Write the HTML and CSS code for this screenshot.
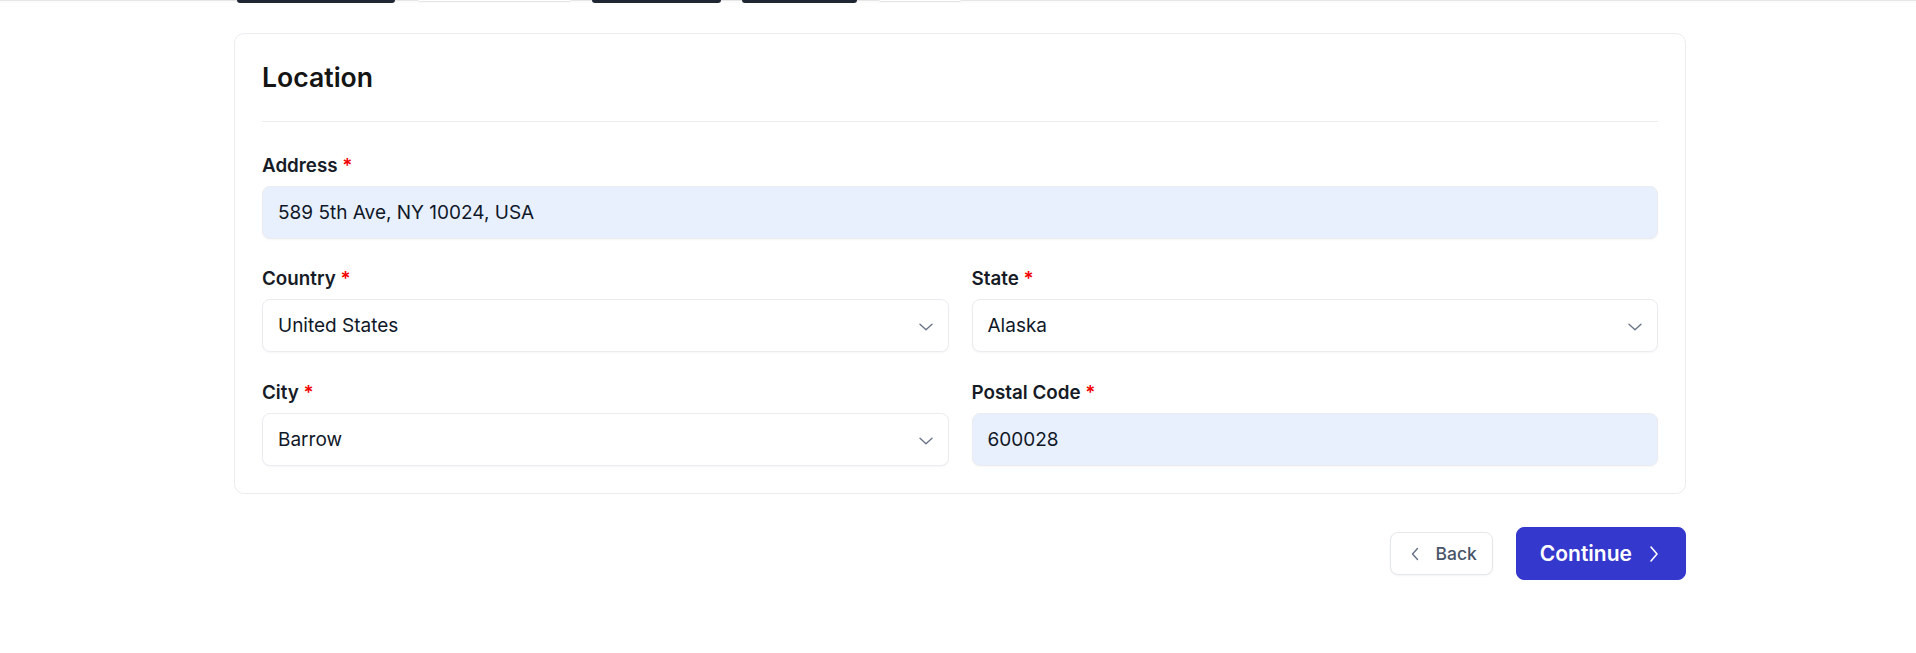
FILE: index.html
```html
<!DOCTYPE html>
<html lang="en">
<head>
<meta charset="utf-8">
<title>Location</title>
<link rel="stylesheet" href="styles.css">
</head>
<body>
<div class="page">
  <div class="topbar">
    <div class="tabs">
      <span class="pill pill-dark pill-a"></span>
      <span class="pill pill-light pill-b"></span>
      <span class="pill pill-dark pill-c"></span>
      <span class="pill pill-dark pill-d"></span>
      <span class="pill pill-light pill-e"></span>
    </div>
  </div>
  <main class="container">
    <section class="card">
      <h2 class="card-title">Location</h2>
      <div class="card-body">
        <div class="field field-full">
          <label class="label" for="address">Address <span class="req">*</span></label>
          <input id="address" class="input input-filled" type="text" value="589 5th Ave, NY 10024, USA">
        </div>
        <div class="grid">
          <div class="field">
            <label class="label">Country <span class="req">*</span></label>
            <div class="select">
              <span class="select-value">United States</span>
              <svg class="chev" width="14" height="8" viewBox="0 0 14 8"><path d="M1 1.2 L7 6.8 L13 1.2" fill="none" stroke="#667085" stroke-width="1.3" stroke-linecap="round" stroke-linejoin="round"/></svg>
            </div>
          </div>
          <div class="field">
            <label class="label">State <span class="req">*</span></label>
            <div class="select">
              <span class="select-value">Alaska</span>
              <svg class="chev" width="14" height="8" viewBox="0 0 14 8"><path d="M1 1.2 L7 6.8 L13 1.2" fill="none" stroke="#667085" stroke-width="1.3" stroke-linecap="round" stroke-linejoin="round"/></svg>
            </div>
          </div>
          <div class="field">
            <label class="label">City <span class="req">*</span></label>
            <div class="select">
              <span class="select-value">Barrow</span>
              <svg class="chev" width="14" height="8" viewBox="0 0 14 8"><path d="M1 1.2 L7 6.8 L13 1.2" fill="none" stroke="#667085" stroke-width="1.3" stroke-linecap="round" stroke-linejoin="round"/></svg>
            </div>
          </div>
          <div class="field">
            <label class="label" for="postal">Postal Code <span class="req">*</span></label>
            <input id="postal" class="input input-filled" type="text" value="600028">
          </div>
        </div>
      </div>
    </section>
    <div class="actions">
      <button class="btn btn-back" type="button">
        <svg width="8" height="14" viewBox="0 0 8 14"><path d="M6.5 1.5 L1.5 7 L6.5 12.5" fill="none" stroke="#667085" stroke-width="1.4" stroke-linecap="round" stroke-linejoin="round"/></svg>
        <span>Back</span>
      </button>
      <button class="btn btn-primary" type="button">
        <span>Continue</span>
        <svg width="10" height="18" viewBox="0 0 10 18"><path d="M2 2 L8 9 L2 16" fill="none" stroke="#ffffff" stroke-width="1.6" stroke-linecap="round" stroke-linejoin="round"/></svg>
      </button>
    </div>
  </main>
</div>
</body>
</html>
```

FILE: styles.css
```css
* { box-sizing: border-box; }

html, body {
  margin: 0;
  padding: 0;
  background: #ffffff;
}

body {
  font-family: "Inter", "Noto Sans", "Liberation Sans", sans-serif;
  color: #101828;
}

.topbar {
  height: 3px;
  border-top: 1px solid #e6e6e6;
  background: #fbfbfb;
}

.tabs {
  width: 1452px;
  margin-left: calc((100% - 1452px) / 2 + 2px);
  padding-left: 3px;
  display: flex;
  gap: 22px;
  margin-top: -1px;
}

.pill {
  display: block;
  height: 3px;
  border-radius: 0 0 4px 4px;
}

.pill-dark { background: #1f2733; }
.pill-light { background: #ffffff; border-bottom: 1px solid #e4e4e4; height: 2px; }

.pill-a { width: 158px; }
.pill-b { width: 153px; margin-left: 1px; }
.pill-c { width: 129px; margin-left: -1px; }
.pill-d { width: 115px; margin-left: -1px; }
.pill-e { width: 82px; }

.container {
  width: 1452px;
  margin-left: calc((100% - 1452px) / 2 + 2px);
  padding-top: 30px;
}

.card {
  border: 1px solid #eaecf0;
  border-radius: 10px;
  padding: 26px 27px 27px;
  background: #ffffff;
}

.card-title {
  margin: 0;
  font-size: 26.6px;
  line-height: 34px;
  font-weight: 600;
  color: #141414;
  padding-bottom: 27px;
  border-bottom: 1px solid #eaecf0;
}

.card-body {
  padding-top: 31px;
}

.field {
  display: flex;
  flex-direction: column;
}

.field-full {
  margin-bottom: 27px;
}

.label {
  font-size: 18.8px;
  line-height: 26px;
  font-weight: 600;
  color: #161b26;
  margin-bottom: 7px;
}

.req {
  color: #f20000;
}

.grid {
  display: grid;
  grid-template-columns: 1fr 1fr;
  column-gap: 23px;
  row-gap: 28px;
}

.input,
.select {
  height: 53px;
  width: 100%;
  border: 1px solid #eaecf0;
  border-radius: 8px;
  padding: 0 15px;
  font-family: "Inter", "Noto Sans", "Liberation Sans", sans-serif;
  font-size: 19px;
  color: #101828;
  background: #ffffff;
  box-shadow: 0 1px 2px rgba(16, 24, 40, 0.04);
  outline: none;
}

.input-filled {
  background: #e8f0fe;
}

.select {
  display: flex;
  align-items: center;
  justify-content: space-between;
  padding-right: 15px;
}

.chev {
  display: block;
  margin-top: 2px;
}

.actions {
  margin-top: 33px;
  display: flex;
  justify-content: flex-end;
  align-items: center;
  gap: 23px;
}

.btn {
  display: inline-flex;
  align-items: center;
  font-family: "Inter", "Noto Sans", "Liberation Sans", sans-serif;
  cursor: pointer;
  border-radius: 8px;
}

.btn-back {
  height: 43px;
  padding: 0 15px 0 20px;
  gap: 17px;
  background: #ffffff;
  border: 1px solid #e4e7ec;
  box-shadow: 0 1px 2px rgba(16, 24, 40, 0.05);
  font-size: 17.5px;
  font-weight: 500;
  color: #475467;
}

.btn-primary {
  height: 53px;
  padding: 0 26px 0 23px;
  gap: 17px;
  background: #3538cd;
  border: 1px solid #3538cd;
  font-size: 21px;
  font-weight: 600;
  color: #ffffff;
}
```
